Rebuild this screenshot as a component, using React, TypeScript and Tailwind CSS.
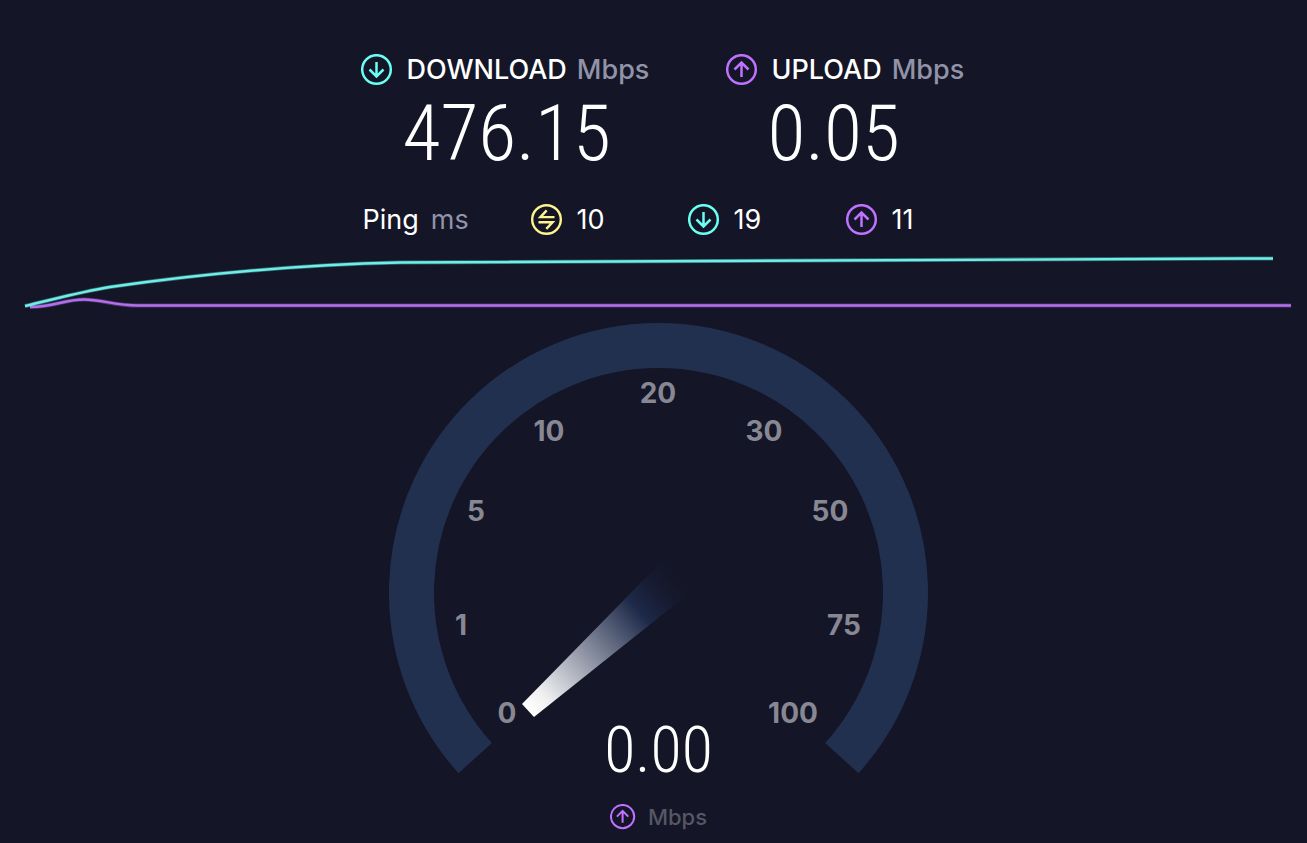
import React from 'react'

const scale = [
  { label: '0', x: 118, y: 400 },
  { label: '1', x: 72, y: 312 },
  { label: '5', x: 87, y: 198 },
  { label: '10', x: 160, y: 118 },
  { label: '20', x: 269, y: 80 },
  { label: '30', x: 375, y: 118 },
  { label: '50', x: 441, y: 198 },
  { label: '75', x: 455, y: 312 },
  { label: '100', x: 404, y: 400 },
]

const DownIcon = () => (
  <svg viewBox="0 0 32 32" className="size-8 shrink-0" fill="none" stroke="#6afff3" strokeWidth="2.5" aria-hidden="true">
    <circle cx="15.5" cy="15.5" r="14.3" />
    <path d="M15.5 8V22.6M8.500 15.500L15.500 22.500L22.500 15.500" />
  </svg>
)

const UpIcon = ({ className }: { className: string }) => (
  <svg viewBox="0 0 32 32" className={className} fill="none" stroke="#bf71ff" strokeWidth="2.5" aria-hidden="true">
    <circle cx="15.5" cy="15.5" r="14.3" />
    <path d="M15.5 23V8.800M8.500 15.500L15.500 8.500L22.500 15.500" />
  </svg>
)

const PingIcon = () => (
  <svg viewBox="0 0 32 32" className="size-8 shrink-0" fill="none" stroke="#fff38e" strokeWidth="2.4" aria-hidden="true">
    <circle cx="15.5" cy="15.5" r="14.3" />
    <path d="M23.500 13.100H9.400L15.700 6.400M7.500 18.200H21.600L15.300 24.900" />
  </svg>
)

const Result = ({ icon, name, value }: { icon: React.ReactNode; name: string; value: string }) => (
  <div>
    <div className="flex items-center gap-3.5">
      {icon}
      <h2 className="flex gap-2.5 text-[27px] leading-8 font-medium text-white">
        {name} <span className="text-[#9193a8]">Mbps</span>
      </h2>
    </div>
    <p className="pl-10.5 font-['Roboto_Condensed',Roboto,sans-serif] text-[78px] leading-24 font-light text-white">
      {value}
    </p>
  </div>
)

const Latency = ({ icon, value }: { icon: React.ReactNode; value: string }) => (
  <div className="flex items-center gap-3.5">
    {icon}
    <span>{value}</span>
  </div>
)

const Chart = () => (
  <svg viewBox="0 0 1307 64" className="block w-full" fill="none" role="img" aria-label="Speed over time">
    <path d="M30 57C54 57 64 49.500 84 49.500C102 49.500 114 55.500 138 55.500H1291" stroke="#bf71ff" strokeOpacity=".35" strokeWidth="4" />
    <path d="M30 57C54 57 64 49.500 84 49.500C102 49.500 114 55.500 138 55.500H1291" stroke="#b070ea" strokeWidth="2.400" />
    <path d="M25 56C55 49 80 42 110 37C200 24 290 15 400 12.500C520 10 900 9 1273 8.500" stroke="#6afff3" strokeOpacity=".35" strokeWidth="4" />
    <path d="M25 56C55 49 80 42 110 37C200 24 290 15 400 12.500C520 10 900 9 1273 8.500" stroke="#6feee8" strokeWidth="2.400" />
  </svg>
)

const Gauge = () => (
  <svg viewBox="0 0 539 508" className="col-start-1 row-start-1 w-[539px]" role="img" aria-label="Speed gauge">
    <defs>
      <linearGradient id="needle" gradientUnits="userSpaceOnUse" x1="139" y1="387" x2="299" y2="248">
        <stop offset="0" stopColor="#ffffff" />
        <stop offset=".1" stopColor="#f0f0f2" />
        <stop offset=".7" stopColor="#1e2a4a" />
        <stop offset="1" stopColor="#141526" stopOpacity="0" />
      </linearGradient>
    </defs>
    <path d="M86.200 435.100A247 247 0 1 1 452.800 435.100" fill="none" stroke="#22304f" strokeWidth="45" />
    <path d="M133 381L145 394L308 264L277 234Z" fill="url(#needle)" />
    {scale.map((tick) => (
      <text key={tick.label} x={tick.x} y={tick.y} textAnchor="middle" className="fill-[#878893] text-[28px] font-bold">
        {tick.label}
      </text>
    ))}
  </svg>
)

const App = () => {
  return (
    <main className="min-h-screen bg-[#141526] pt-[54px] font-[Inter,sans-serif] text-white">
      <section className="mx-auto w-full max-w-[586px]">
        <div className="grid grid-cols-[365px_1fr] whitespace-nowrap">
          <Result icon={<DownIcon />} name="DOWNLOAD" value="476.15" />
          <Result icon={<UpIcon className="size-8 shrink-0" />} name="UPLOAD" value="0.05" />
        </div>
        <div className="mt-[22px] grid grid-cols-[170px_157px_158px_1fr] text-[27px] leading-8">
          <h3 className="flex gap-3 pl-0.5">
            Ping <span className="text-[#9193a8]">ms</span>
          </h3>
          <Latency icon={<PingIcon />} value="10" />
          <Latency icon={<DownIcon />} value="19" />
          <Latency icon={<UpIcon className="size-8 shrink-0" />} value="11" />
        </div>
      </section>
      <section className="mt-3.5">
        <Chart />
      </section>
      <section className="mt-[9px] grid justify-center pl-2.5">
        <Gauge />
        <div className="col-start-1 row-start-1 flex flex-col items-center self-end">
          <p className="font-['Roboto_Condensed',Roboto,sans-serif] text-[64px] leading-16 font-light">0.00</p>
          <div className="mt-5 flex items-center gap-3 text-[22px] leading-7 font-medium text-[#565764]">
            <UpIcon className="size-6.5" />
            Mbps
          </div>
        </div>
      </section>
    </main>
  )
}

export default App
